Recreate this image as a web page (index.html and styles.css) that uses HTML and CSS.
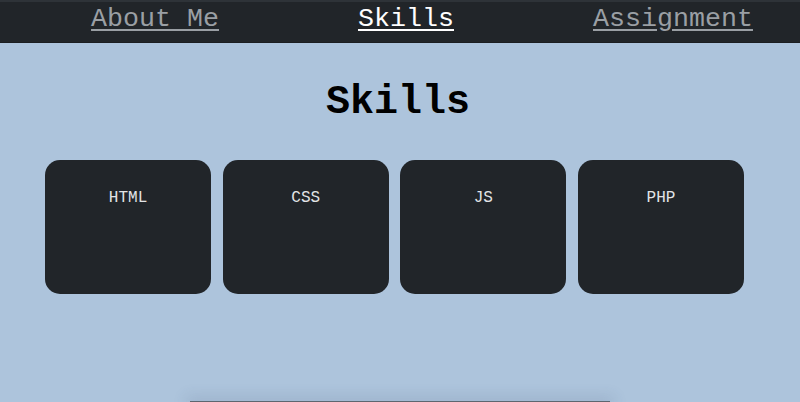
FILE: index.html
```html
<!DOCTYPE html>
<html lang="en">
<head>
<meta charset="utf-8">
<title>Skills</title>
<link rel="stylesheet" href="styles.css">
</head>
<body>
<div class="page">
  <nav class="nav">
    <ul class="nav-list">
      <li><a class="nav-link" href="#">About Me</a></li>
      <li><a class="nav-link active" href="#">Skills</a></li>
      <li><a class="nav-link" href="#">Assignment</a></li>
    </ul>
  </nav>
  <main class="main">
    <h1 class="title">Skills</h1>
    <div class="cards">
      <div class="card">HTML</div>
      <div class="card">CSS</div>
      <div class="card">JS</div>
      <div class="card">PHP</div>
    </div>
  </main>
  <footer class="footer"></footer>
</div>
</body>
</html>
```

FILE: styles.css
```css
html, body {
  margin: 0;
  padding: 0;
  height: 100%;
}
body {
  background: #adc4dc;
  font-family: "Liberation Mono", "Courier New", monospace;
  overflow: hidden;
}
.page {
  min-height: 100vh;
  display: flex;
  flex-direction: column;
}
.nav {
  background: #212529;
  border-top: 2px solid #2e3338;
  border-bottom: 1px solid #1b1e21;
  height: 40px;
}
.nav-list {
  list-style: none;
  margin: 0;
  padding: 2px 0 0 44px;
  display: flex;
  justify-content: center;
  gap: 139px;
  height: 100%;
  box-sizing: border-box;
}
.nav-list li {
  display: flex;
  align-items: flex-start;
}
.nav-link {
  font-size: 26.67px;
  line-height: 30px;
  color: #9a9fa4;
  text-decoration: underline;
  text-underline-offset: 3px;
}
.nav-link.active {
  color: #ffffff;
}
.main {
  flex: 1;
}
.title {
  margin: 37px 0 0;
  text-align: center;
  font-size: 40px;
  line-height: 46px;
  font-weight: bold;
  color: #000;
  padding-right: 4px;
}
.cards {
  display: flex;
  gap: 11.5px;
  padding: 0 56px 0 45px;
  margin-top: 34px;
}
.card {
  flex: 1;
  height: 134px;
  background: #212529;
  border-radius: 15px;
  box-sizing: border-box;
  padding-top: 29px;
  text-align: center;
  color: #e2e4e6;
  font-size: 16px;
  line-height: 18px;
}
.footer {
  align-self: center;
  width: 420px;
  height: 1px;
  background: #5d6670;
  box-shadow: 0 0 14px 4px rgba(60, 80, 110, 0.18);
}
```
